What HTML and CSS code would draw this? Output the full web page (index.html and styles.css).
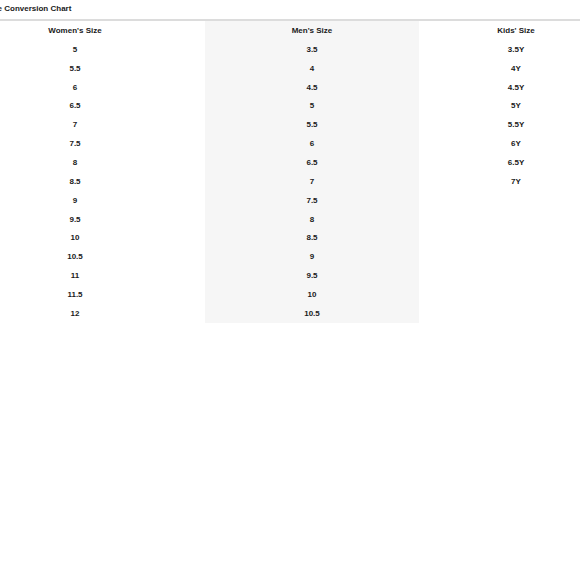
FILE: index.html
```html
<!DOCTYPE html>
<html>
<head>
<meta charset="utf-8">
<link rel="stylesheet" href="styles.css">
</head>
<body>
<div class="page">
  <h1 class="title">Size Conversion Chart</h1>
  <div class="divider"></div>
  <table class="chart">
    <colgroup>
      <col class="c-women">
      <col class="c-men">
      <col class="c-kids">
    </colgroup>
    <thead>
      <tr><th>Women's Size</th><th class="men">Men's Size</th><th>Kids' Size</th></tr>
    </thead>
    <tbody>
      <tr><td>5</td><td class="men">3.5</td><td>3.5Y</td></tr>
      <tr><td>5.5</td><td class="men">4</td><td>4Y</td></tr>
      <tr><td>6</td><td class="men">4.5</td><td>4.5Y</td></tr>
      <tr><td>6.5</td><td class="men">5</td><td>5Y</td></tr>
      <tr><td>7</td><td class="men">5.5</td><td>5.5Y</td></tr>
      <tr><td>7.5</td><td class="men">6</td><td>6Y</td></tr>
      <tr><td>8</td><td class="men">6.5</td><td>6.5Y</td></tr>
      <tr><td>8.5</td><td class="men">7</td><td>7Y</td></tr>
      <tr><td>9</td><td class="men">7.5</td><td></td></tr>
      <tr><td>9.5</td><td class="men">8</td><td></td></tr>
      <tr><td>10</td><td class="men">8.5</td><td></td></tr>
      <tr><td>10.5</td><td class="men">9</td><td></td></tr>
      <tr><td>11</td><td class="men">9.5</td><td></td></tr>
      <tr><td>11.5</td><td class="men">10</td><td></td></tr>
      <tr><td>12</td><td class="men">10.5</td><td></td></tr>
    </tbody>
  </table>
</div>
</body>
</html>
```

FILE: styles.css
```css
html, body {
  margin: 0;
  padding: 0;
  background: #ffffff;
}
body {
  width: 580px;
  height: 580px;
  overflow: hidden;
  font-family: "Liberation Sans", Arial, Helvetica, sans-serif;
  color: #1a1a1a;
}
.page {
  width: 580px;
}
.title {
  margin: 0 0 2px -14px;
  padding-top: 1px;
  font-size: 8px;
  font-weight: bold;
  line-height: 16px;
  white-space: nowrap;
}
.divider {
  height: 2px;
  background: #dcdcdc;
}
.chart {
  margin-left: -55px;
  width: 668px;
  border-collapse: collapse;
  table-layout: fixed;
  font-size: 8px;
  font-weight: bold;
}
.c-women { width: 260px; }
.c-men { width: 214px; }
.c-kids { width: 194px; }
.chart th,
.chart td {
  height: 17.86px;
  padding: 1px 0 0;
  text-align: center;
  vertical-align: middle;
  font-weight: bold;
  line-height: 10px;
}
.chart .men {
  background: #f6f6f6;
}
```
